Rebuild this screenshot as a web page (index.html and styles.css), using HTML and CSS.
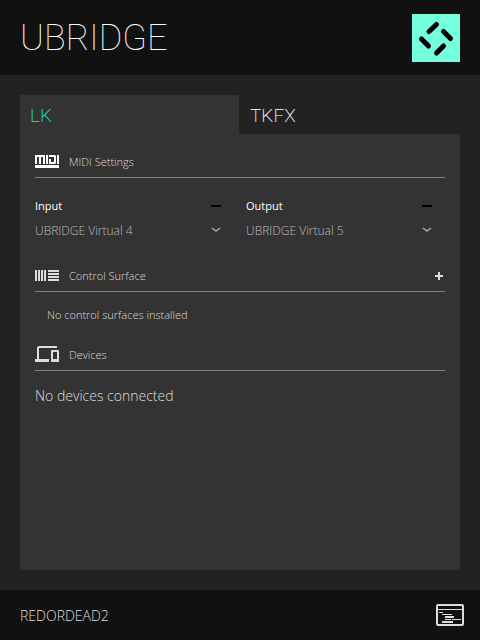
FILE: index.html
```html
<!DOCTYPE html>
<html lang="en">
<head>
<meta charset="utf-8">
<meta name="viewport" content="width=device-width, initial-scale=1">
<title>UBRIDGE</title>
<link rel="stylesheet" href="styles.css">
</head>
<body>
<header class="header">
  <h1 class="title">UBRIDGE</h1>
  <svg class="logo" viewBox="0 0 48 48" role="img" aria-label="UBRIDGE logo">
    <path class="logo-bg" d="M0 0h48v48H0z"/>
    <path class="logo-bars" d="M17 17.500l7.500-7M31.500 17.500l7 7M9.500 25l7 7M24.500 39l7-7"/>
  </svg>
</header>

<main class="main">
  <div class="tabs" role="tablist">
    <button class="tab active" role="tab" aria-selected="true" type="button">LK</button>
    <button class="tab" role="tab" aria-selected="false" type="button">TKFX</button>
  </div>
  <div class="panel" role="tabpanel">
    <section>
      <div class="section-head">
        <svg class="icon icon-midi" viewBox="0 0 24 24" aria-hidden="true">
          <path d="M0 5h10v9H8V7H6v7H4V7H2v7H0zM11 5h2v9h-2zM14 5h6l1 1v7l-1 1h-6V9h2v3h3V7h-5zM22 5h2v9h-2zM0 15h24v3H0z"/>
        </svg>
        <h2 class="heading">MIDI Settings</h2>
      </div>
      <div class="ports">
        <div class="port">
          <label class="port-label" for="input">Input</label>
          <button class="remove" type="button" aria-label="Clear input"></button>
          <select class="select" id="input"><option>UBRIDGE Virtual 4</option></select>
          <svg class="chevron" viewBox="0 0 10 6" aria-hidden="true"><path d="M1 1l4 3 4-3"/></svg>
        </div>
        <div class="port">
          <label class="port-label" for="output">Output</label>
          <button class="remove" type="button" aria-label="Clear output"></button>
          <select class="select" id="output"><option>UBRIDGE Virtual 5</option></select>
          <svg class="chevron" viewBox="0 0 10 6" aria-hidden="true"><path d="M1 1l4 3 4-3"/></svg>
        </div>
      </div>
    </section>
    <section>
      <div class="section-head">
        <svg class="icon" viewBox="0 0 24 24" aria-hidden="true">
          <path d="M0 6h2v11H0zM3 6h2v11H3zM6 6h2v11H6zM9 6h2v11H9zM13 6h11v2H13zM13 9h11v2H13zM13 12h11v2H13zM13 15h11v2H13z"/>
        </svg>
        <h2 class="heading">Control Surface</h2>
        <button class="add" type="button" aria-label="Add control surface">
          <svg class="plus" viewBox="0 0 8 8" aria-hidden="true"><path d="M3 0h2v3h3v2H5v3H3V5H0V3h3z"/></svg>
        </button>
      </div>
      <p class="note">No control surfaces installed</p>
    </section>
    <section>
      <div class="section-head">
        <svg class="icon" viewBox="0 0 24 24" aria-hidden="true">
          <path d="M4 5h18V3H4c-1.100 0-2 .900-2 2v11H0v3h14v-3H4V5zm19 2h-6c-.550 0-1 .450-1 1v10c0 .550.450 1 1 1h6c.550 0 1-.450 1-1V8c0-.550-.450-1-1-1zm-1 9h-4V9h4v7z"/>
        </svg>
        <h2 class="heading">Devices</h2>
      </div>
      <p class="devices">No devices connected</p>
    </section>
  </div>
</main>

<footer class="footer">
  <span class="host">REDORDEAD2</span>
  <button class="console" type="button" aria-label="Open console">
    <svg class="console-icon" viewBox="0 0 28 22" aria-hidden="true">
      <rect class="frame" x="1" y="1" width="26" height="20" rx="1"/>
      <path d="M2 5h24v1H2zM3 8h4v1H3zM6 10h10v1H6zM9 12h9v2H9zM9 15h6v1H9zM16 15h9v1h-9zM6 17h11v2H6z"/>
    </svg>
  </button>
</footer>
</body>
</html>
```
FILE: styles.css
```css
* {
  box-sizing: border-box;
}

body {
  margin: 0;
  min-height: 100vh;
  display: flex;
  flex-direction: column;
  background: #222;
  color: #ddd;
  font: 300 14px/20px "Open Sans", sans-serif;
}

h1, h2, p {
  margin: 0;
  font-weight: 300;
}

button, select {
  padding: 0;
  border: 0;
  background: none;
  color: inherit;
  font: inherit;
}

svg {
  display: block;
  fill: currentColor;
}

.header {
  display: flex;
  align-items: center;
  justify-content: space-between;
  height: 75px;
  padding: 0 20px;
  background: #111;
}

.title {
  color: #fff;
  font: 100 36px/48px Roboto, sans-serif;
}

.logo {
  width: 48px;
  height: 48px;
}

.logo-bg {
  fill: #76ffdc;
}

.logo-bars {
  fill: none;
  stroke: #000;
  stroke-width: 5;
  stroke-linecap: round;
}

.main {
  flex: 1;
  display: flex;
  flex-direction: column;
  padding: 20px;
}

.tabs {
  display: flex;
}

.tab {
  flex: 1;
  height: 39px;
  padding: 2px 11px 0;
  color: #fff;
  font: 200 19px/36px Roboto, sans-serif;
  text-align: left;
}

.tab.active {
  padding: 2px 10px 0;
  background: #333;
  color: #1de9c6;
}

.panel {
  flex: 1;
  padding: 15px;
  background: #333;
}

.section-head {
  display: flex;
  align-items: center;
  gap: 10px;
  height: 29px;
  padding-bottom: 3px;
  border-bottom: 1px solid #808080;
}

.icon {
  width: 24px;
  height: 24px;
}

.icon-midi {
  color: #fff;
}

.heading {
  font-size: 11px;
}

.ports {
  display: grid;
  grid-template-columns: 1fr 1fr;
  gap: 12px;
  padding: 18px 0 22px;
}

.port {
  display: grid;
  grid-template-columns: 1fr 10px;
  align-items: center;
  row-gap: 5px;
  padding-right: 13px;
}

.port-label {
  color: #fff;
  font-size: 11px;
  font-weight: 400;
}

.remove {
  width: 10px;
  height: 2px;
  background: #000;
}

.select {
  grid-area: 2 / 1 / 3 / 3;
  width: 100%;
  height: 20px;
  appearance: none;
  color: #bbb;
  font-size: 12px;
}

.chevron {
  grid-area: 2 / 2 / 3 / 3;
  width: 10px;
  height: 6px;
  margin-bottom: 2px;
  fill: none;
  stroke: #aaa;
  stroke-width: 1.5;
  pointer-events: none;
}

.add {
  margin-left: auto;
  padding: 2px;
}

.plus {
  width: 8px;
  height: 8px;
}

.note {
  padding: 13px 12px 17px;
  font-size: 11px;
}

.devices {
  padding-top: 15px;
}

.footer {
  display: flex;
  align-items: center;
  justify-content: space-between;
  height: 50px;
  padding: 0 16px 0 20px;
  background: #111;
}

.host {
  padding-top: 2px;
}

.console-icon {
  width: 28px;
  height: 22px;
}

.frame {
  fill: none;
  stroke: currentColor;
  stroke-width: 2;
}
```
